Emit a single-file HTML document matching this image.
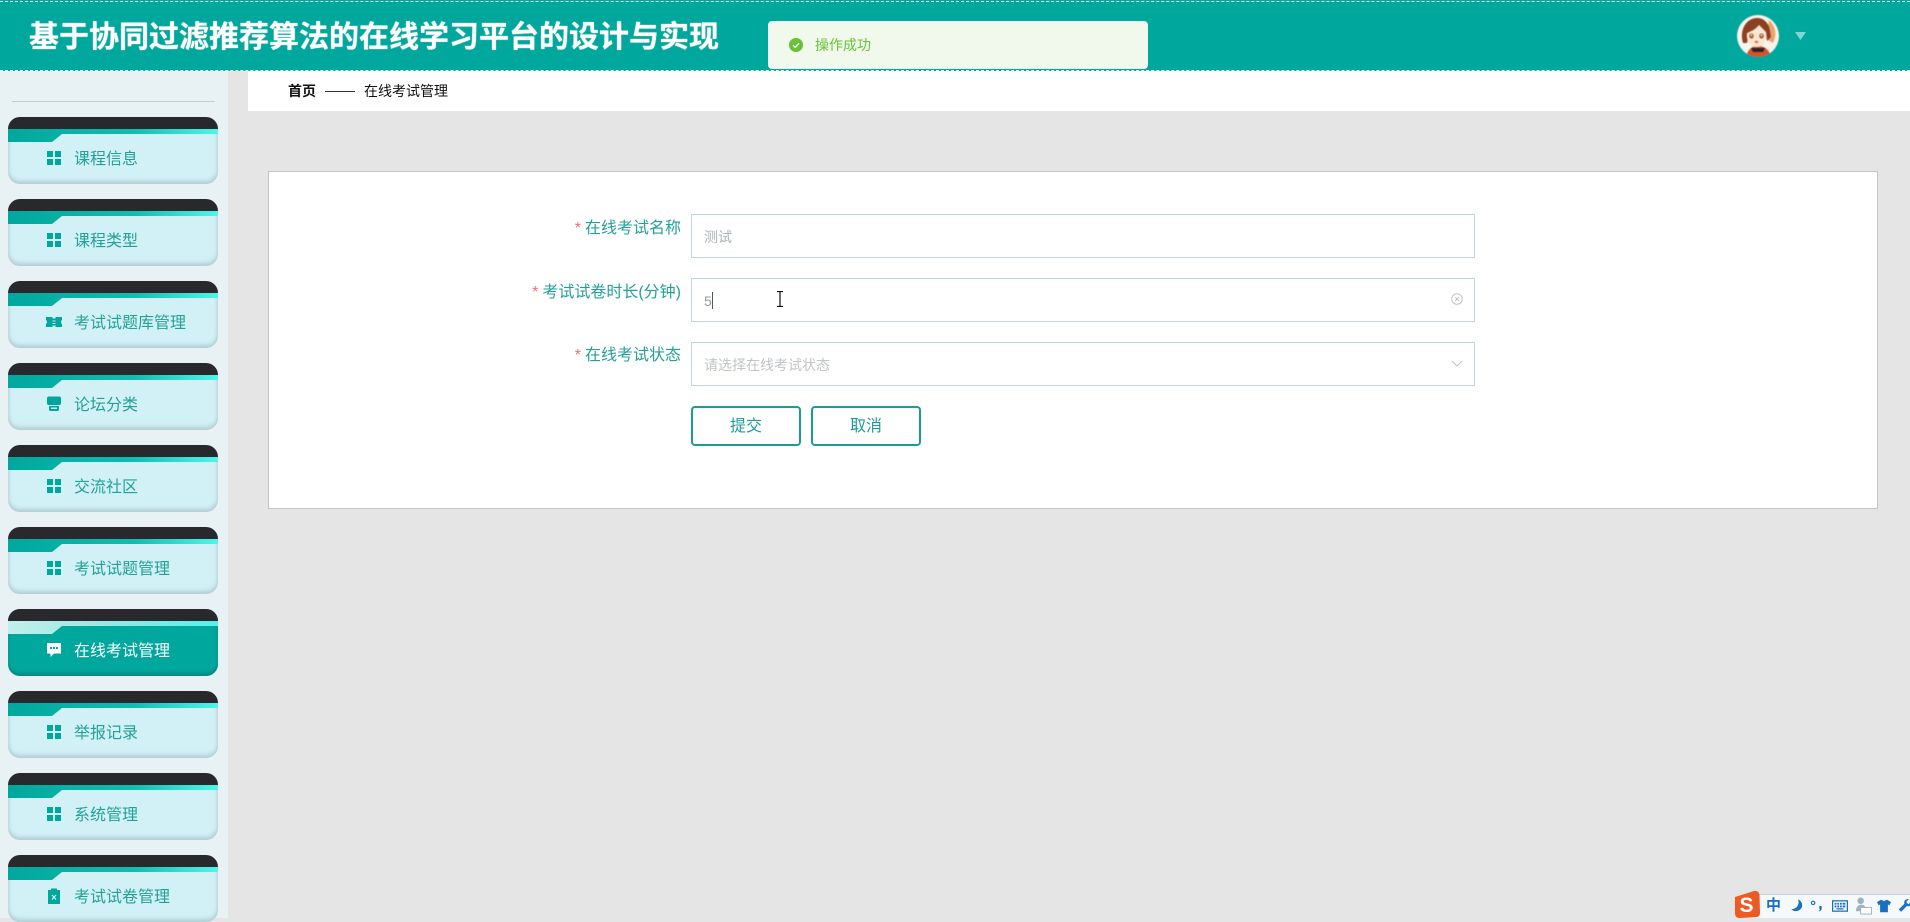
<!DOCTYPE html>
<html lang="zh"><head><meta charset="utf-8"><title>在线考试管理</title>
<style>
*{box-sizing:border-box;margin:0;padding:0}
html,body{width:1910px;height:918px;overflow:hidden;background:#e5e5e5;font-family:"Liberation Sans","Noto Sans CJK SC",sans-serif}
.abs,.abs *{position:absolute}
#hdr{left:0;top:0;width:1910px;height:71px;background:#00a79d}
#hdr .d1,#hdr .d2{left:0;width:1910px;height:0;border-top:1px dashed #e8fbf9}
#hdr .d1{top:1px}#hdr .d2{top:70px}
#title{left:29px;top:16px;font-size:30px;line-height:44px;font-weight:700;color:#fff;white-space:nowrap;text-shadow:0 0 1px #fff}
#msg{left:768px;top:21px;width:380px;height:48px;background:#f0f9eb;border-radius:4px}
#msg span{left:47px;top:14px;font-size:14px;line-height:20px;color:#67c23a;white-space:nowrap}
#side{left:0;top:71px;width:228px;height:847px;background:#e8f1f4}
#side .rule{left:12px;top:30px;width:203px;height:1px;background:#bfcfd0}
.item{left:8px;width:210px;height:67px;border-radius:12px;overflow:hidden;background:#d2f1f6;box-shadow:inset 0 -3px 4px #b2ced4,inset 3px 0 3px -2px #c4e0e6,inset -3px 0 3px -2px #c4e0e6}
.item .top{left:0;top:0;width:210px;height:12px;background:#29292d}
.item .strip{left:0;top:12px;width:210px;height:13px;background:linear-gradient(90deg,#00a79d,#10bdb1 60%,#4ff5ea);clip-path:polygon(0 0,100% 0,100% 5px,54px 5px,44px 100%,0 100%)}
.item svg{left:38px;top:33px;width:16px;height:16px}
.item b{left:66px;top:31px;font-weight:400;font-size:16px;line-height:24px;color:#24a098;white-space:nowrap}
.item.on{background:#00a79d;box-shadow:inset 0 -3px 3px #078a82}
.item.on .strip{background:linear-gradient(90deg,#c2efec,#9fe8e3 40%,#4ff5ea)}
.item.on b{color:#fff}
#crumb{left:248px;top:71px;width:1662px;height:40px;background:#fff}
#crumb span{top:10px;font-size:14px;line-height:20px;color:#111;white-space:nowrap}
#crumb i{left:77px;top:20px;width:30px;height:1px;background:#333}
#card{left:268px;top:171px;width:1610px;height:338px;background:#fff;border:1px solid #c4c4c4}
.lab{font-size:16px;line-height:24px;color:#24a098;white-space:nowrap;text-align:right}
.lab em{position:static;font-style:normal;color:#f56c6c;margin-right:4px}
.inp{left:691px;width:784px;height:44px;background:#fff;border:1px solid #c3d6da}
.inp span{left:12px;top:12px;font-size:14px;line-height:20px;white-space:nowrap}
.btn{left:691px;top:406px;width:110px;height:40px;border:2px solid #1d9c94;border-radius:4px;background:#fff;color:#1d9c94;font-size:16px;line-height:38px;text-align:center}
#tray{left:1752px;top:894px;width:158px;height:24px;background:#f6f9fc;border-top:1px solid #c6d2de;overflow:hidden}
</style></head><body>
<div class="abs" style="left:0;top:0;width:1910px;height:918px">

<div id="side"><div class="rule"></div></div>

<div id="crumb"><span style="left:40px;font-weight:700">首页</span><i></i><span style="left:116px">在线考试管理</span></div>

<div id="card"></div>

<div id="hdr"><div class="d1"></div><div class="d2"></div>
<div id="title">基于协同过滤推荐算法的在线学习平台的设计与实现</div>
<div id="msg">
<svg style="left:21px;top:17px" width="14" height="14" viewBox="0 0 14 14"><circle cx="7" cy="7" r="7" fill="#67c23a"/><path d="M4 7.200l2.200 2.100L10 5.200" fill="none" stroke="#fff" stroke-width="1.300"/></svg>
<span>操作成功</span></div>
<svg style="left:1737px;top:15px;filter:blur(.4px)" width="42" height="42" viewBox="0 0 42 42">
<defs><clipPath id="av"><circle cx="21" cy="21" r="21"/></clipPath></defs>
<g clip-path="url(#av)">
<rect width="42" height="42" fill="#f8f3ec"/>
<path d="M33 6c6 6 7 14 3 22l-5-3 1-11-3-8z" fill="#eba36a"/>
<path d="M28 5l4 2-1 3-4-2z" fill="#fff"/>
<path d="M9 42c2-8 6-11 12-11s11 3 13 11z" fill="#d9502a"/>
<path d="M14 33h14l-2 4H16z" fill="#2b2522"/>
<path d="M6 28C2 14 10 3 20 3c7 0 12 5 13 13l1 6-4 4-1-9-7-7c-3 4-7 6-10 7l-2 11z" fill="#8c3f22"/>
<path d="M10 18c4-1 8-3 12-8 2 3 5 5 7 8 1 7-2 14-9 14s-11-6-10-14z" fill="#fbe6d4"/>
<ellipse cx="14.500" cy="21" rx="2.300" ry="2.600" fill="#a3602f"/><ellipse cx="24.500" cy="21" rx="2.300" ry="2.600" fill="#a3602f"/>
<circle cx="14.500" cy="20.200" r=".8" fill="#fff"/><circle cx="24.500" cy="20.200" r=".8" fill="#fff"/>
<ellipse cx="19.500" cy="27" rx="1.800" ry="1.200" fill="#e0715a"/>
</g>
</svg>
<svg style="left:1795px;top:32px" width="11" height="8" viewBox="0 0 11 8"><path d="M0 0h11L5.500 8z" fill="#7fd7d1"/></svg>
</div>

<div class="item" style="top:117px"><div class="top"></div><div class="strip"></div><svg viewBox="0 0 16 16"><path d="M1 1h6v6H1zM9 1h6v6H9zM1 9h6v6H1zM9 9h6v6H9z" fill="#00a79d"/></svg><b>课程信息</b></div>
<div class="item" style="top:199px"><div class="top"></div><div class="strip"></div><svg viewBox="0 0 16 16"><path d="M1 1h6v6H1zM9 1h6v6H9zM1 9h6v6H1zM9 9h6v6H9z" fill="#00a79d"/></svg><b>课程类型</b></div>
<div class="item" style="top:281px"><div class="top"></div><div class="strip"></div><svg viewBox="0 0 16 16"><path d="M0 3h6.500v1.500h3V3H16v3c-.7.4-1 1.200-1 2s.3 1.600 1 2v3H9.500v-1.500h-3V13H0v-3c.7-.4 1-1.200 1-2s-.3-1.600-1-2zM6.500 6.500v1h3v-1zM6.500 9v1h3V9z" fill="#00a79d" fill-rule="evenodd"/></svg><b>考试试题库管理</b></div>
<div class="item" style="top:363px"><div class="top"></div><div class="strip"></div><svg viewBox="0 0 16 16"><path d="M3 .5h10a2 2 0 0 1 2 2v5c0 1-1 1.500-2 1.500H3C2 9 1 8.500 1 7.500v-5a2 2 0 0 1 2-2zM3 10h10v3.500a1.500 1.500 0 0 1-1.500 1.500h-7A1.500 1.500 0 0 1 3 13.500zM5 11.500v1.500h6v-1.500z" fill="#00a79d" fill-rule="evenodd"/></svg><b>论坛分类</b></div>
<div class="item" style="top:445px"><div class="top"></div><div class="strip"></div><svg viewBox="0 0 16 16"><path d="M1 1h6v6H1zM9 1h6v6H9zM1 9h6v6H1zM9 9h6v6H9z" fill="#00a79d"/></svg><b>交流社区</b></div>
<div class="item" style="top:527px"><div class="top"></div><div class="strip"></div><svg viewBox="0 0 16 16"><path d="M1 1h6v6H1zM9 1h6v6H9zM1 9h6v6H1zM9 9h6v6H9z" fill="#00a79d"/></svg><b>考试试题管理</b></div>
<div class="item on" style="top:609px"><div class="top"></div><div class="strip"></div><svg viewBox="0 0 16 16"><path d="M1 1h14v10.500H8L4.500 15v-3.500H1z" fill="#fff"/><path d="M4 5h2v2H4zM7 5h2v2H7zM10 5h2v2h-2z" fill="#00a79d"/></svg><b>在线考试管理</b></div>
<div class="item" style="top:691px"><div class="top"></div><div class="strip"></div><svg viewBox="0 0 16 16"><path d="M1 1h6v6H1zM9 1h6v6H9zM1 9h6v6H1zM9 9h6v6H9z" fill="#00a79d"/></svg><b>举报记录</b></div>
<div class="item" style="top:773px"><div class="top"></div><div class="strip"></div><svg viewBox="0 0 16 16"><path d="M1 1h6v6H1zM9 1h6v6H9zM1 9h6v6H1zM9 9h6v6H9z" fill="#00a79d"/></svg><b>系统管理</b></div>
<div class="item" style="top:855px"><div class="top"></div><div class="strip"></div><svg viewBox="0 0 16 16"><path d="M2 2h3V.5h6V2h3v14H2z" fill="#00a79d"/><path d="M6 7l4 4.500M10 7l-4 4.500" stroke="#d2f1f6" stroke-width="1.300"/></svg><b>考试试卷管理</b></div>

<div class="lab" style="top:217px;right:1229px"><em>*</em>在线考试名称</div>
<div class="lab" style="top:281px;right:1229px"><em>*</em>考试试卷时长(分钟)</div>
<div class="lab" style="top:344px;right:1229px"><em>*</em>在线考试状态</div>

<div class="inp" style="top:214px"><span style="color:#a9b4b8">测试</span></div>
<div class="inp" style="top:278px"><span style="color:#8f9a9e">5</span><i style="left:20px;top:13px;width:1px;height:17px;background:#555"></i>
<svg style="left:759px;top:14px" width="12" height="12" viewBox="0 0 12 12"><circle cx="6" cy="6" r="5.300" fill="none" stroke="#c0c4cc"/><path d="M4.200 4.200l3.600 3.600M7.800 4.200l-3.600 3.600" stroke="#b8bcc4"/></svg>
</div>
<div class="inp" style="top:342px"><span style="color:#c0c4cc">请选择在线考试状态</span>
<svg style="left:759px;top:17px" width="12" height="8" viewBox="0 0 12 8"><path d="M1 1l5 5 5-5" fill="none" stroke="#c0c4cc"/></svg></div>

<div class="btn">提交</div>
<div class="btn" style="left:811px">取消</div>

<svg style="left:775px;top:291px" width="10" height="16" viewBox="0 0 10 16"><path d="M2 .5h6M5 .5v15M2 15.500h6" fill="none" stroke="#111" stroke-width="1.200"/></svg>

<div id="tray">
<span style="left:14px;top:-1px;font-size:15px;line-height:24px;font-weight:700;color:#1a6fc0">中</span>
<svg style="left:36px;top:3px" width="15" height="16" viewBox="0 0 18 18"><path d="M12 1c2 5 0 11-8 12 4 4 12 2 13-4 .5-3-1.500-6.500-5-8z" fill="#1a6fc0"/></svg>
<svg style="left:58px;top:4px" width="14" height="14" viewBox="0 0 18 16"><circle cx="4" cy="4" r="2.200" fill="none" stroke="#1a6fc0" stroke-width="1.500"/><path d="M12 8h3v3c0 2-1 3-3 4l-.5-1c1-.5 1.500-1.200 1.500-2h-1z" fill="#1a6fc0"/></svg>
<svg style="left:80px;top:5px" width="16" height="12" viewBox="0 0 18 13"><rect x=".7" y=".7" width="16.600" height="11.600" fill="none" stroke="#1a6fc0" stroke-width="1.400"/><path d="M3 3h2v2H3zM6 3h2v2H6zM9 3h2v2H9zM12 3h3v2h-3zM3 6h2v2H3zM6 6h2v2H6zM9 6h2v2H9zM12 6h3v2h-3zM5 9h8v1.500H5z" fill="#1a6fc0"/></svg>
<svg style="left:103px;top:2px" width="17" height="18" viewBox="0 0 18 19"><circle cx="6" cy="4" r="3.500" fill="#9fb2c2"/><path d="M1 15c0-5 3-7 6-7s4 2 4 4v3z" fill="#9fb2c2"/><rect x="6" y="11" width="11.500" height="7" fill="#fff" stroke="#9fb2c2"/></svg>
<svg style="left:125px;top:4px" width="14" height="14" viewBox="0 0 18 16"><path d="M5 0l4 1.500L13 0l5 3-2 4-2-1v10H4V6L2 7 0 3z" fill="#1a6fc0"/></svg>
<svg style="left:146px;top:3px" width="14" height="15" viewBox="0 0 18 18"><path d="M17 4l-3.500 3.500-3-3L14 1c-3-1-6 1-6 4 0 .6.100 1.200.3 1.700L1 14l3 3 7.300-7.300C15 11 18 8 17 4z" fill="#1a6fc0"/></svg>
</div>
<svg style="left:1732px;top:891px" width="28" height="27" viewBox="0 0 28 27"><path d="M3 6L22 0c3-.5 5 1 5.500 3.500L28 22c0 2-1 3.500-3 4L8 27c-3 0-4.500-1-5-4z" fill="#ee5a24"/><text x="14.500" y="21" font-family="Liberation Sans,sans-serif" font-size="21" font-weight="700" fill="#fff" text-anchor="middle">S</text></svg>

</div>
</body></html>
